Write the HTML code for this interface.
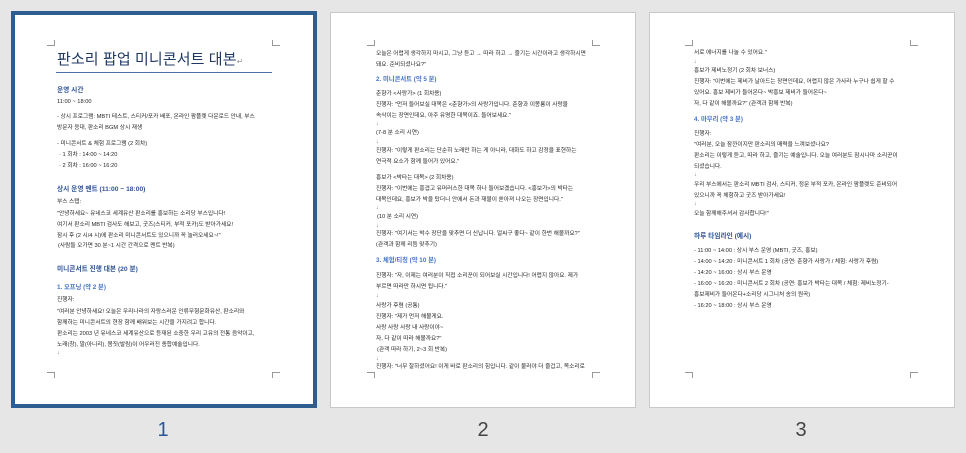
<!DOCTYPE html>
<html><head><meta charset="utf-8"><style>
*{margin:0;padding:0;box-sizing:border-box}
body{width:966px;height:453px;background:#e6e6e6;position:relative;overflow:hidden;font-family:"Liberation Sans","Noto Sans CJK KR",sans-serif}
.pg{position:absolute;background:#fff;border:1px solid #c8c8c8}
.sel{position:absolute;left:11px;top:11px;width:306px;height:397px;border:4px solid #2e5d91;background:#fff}
.t{position:absolute;font-size:5.7px;line-height:8px;color:#262626;white-space:nowrap}
.h{position:absolute;font-size:6.7px;line-height:9px;font-weight:bold;color:#2f5496;white-space:nowrap}
.h2{position:absolute;font-size:6.3px;line-height:9px;font-weight:bold;color:#4472c4;white-space:nowrap}
.c{position:absolute;width:8px;height:6px;border-color:#999;border-style:solid;border-width:0}
.n{position:absolute;top:418px;font-size:20px;line-height:24px;color:#444;width:40px;text-align:center}
.a{color:#888}
</style></head><body>
<div class="sel"></div>
<div class="pg" style="left:330px;top:12px;width:306px;height:396px"></div>
<div class="pg" style="left:649px;top:12px;width:306px;height:396px"></div>

<div class="c" style="left:47px;top:40px;border-right-width:1px;border-bottom-width:1px"></div>
<div class="c" style="left:272px;top:40px;border-left-width:1px;border-bottom-width:1px"></div>
<div class="c" style="left:47px;top:372px;border-right-width:1px;border-top-width:1px"></div>
<div class="c" style="left:272px;top:372px;border-left-width:1px;border-top-width:1px"></div>
<div class="c" style="left:367px;top:40px;border-right-width:1px;border-bottom-width:1px"></div>
<div class="c" style="left:592px;top:40px;border-left-width:1px;border-bottom-width:1px"></div>
<div class="c" style="left:367px;top:372px;border-right-width:1px;border-top-width:1px"></div>
<div class="c" style="left:592px;top:372px;border-left-width:1px;border-top-width:1px"></div>
<div class="c" style="left:685px;top:40px;border-right-width:1px;border-bottom-width:1px"></div>
<div class="c" style="left:910px;top:40px;border-left-width:1px;border-bottom-width:1px"></div>
<div class="c" style="left:685px;top:372px;border-right-width:1px;border-top-width:1px"></div>
<div class="c" style="left:910px;top:372px;border-left-width:1px;border-top-width:1px"></div>

<!-- page 1 -->
<div style="position:absolute;left:57px;top:50px;font-size:15px;line-height:20px;color:#1f3864;white-space:nowrap;letter-spacing:0.1px">판소리 팝업 미니콘서트 대본<span style="font-size:8px;color:#999">↵</span></div>
<div style="position:absolute;left:56px;top:72px;width:216px;height:1px;background:#4a70a8"></div>
<div class="h" style="left:57px;top:86px">운영 시간</div>
<div class="t" style="left:57px;top:98px">11:00 ~ 18:00</div>
<div class="t" style="left:57px;top:113px">- 상시 프로그램: MBTI 테스트, 스티커/포카 배포, 온라인 팜플렛 다운로드 안내, 부스</div>
<div class="t" style="left:57px;top:124px">방문자 응대, 판소리 BGM 상시 재생</div>
<div class="t" style="left:57px;top:140px">- 미니콘서트 &amp; 체험 프로그램 (2 회차)</div>
<div class="t" style="left:59px;top:151px">· 1 회차 : 14:00 ~ 14:20</div>
<div class="t" style="left:59px;top:162px">· 2 회차 : 16:00 ~ 16:20</div>
<div class="h" style="left:57px;top:185px">상시 운영 멘트 (11:00 ~ 18:00)</div>
<div class="t" style="left:57px;top:198px">부스 스탭:</div>
<div class="t" style="left:57px;top:210px">"안녕하세요~ 유네스코 세계유산 판소리를 홍보하는 소리당 부스입니다!</div>
<div class="t" style="left:57px;top:221px">여기서 판소리 MBTI 검사도 해보고, 굿즈(스티커, 부적 포카)도 받아가세요!</div>
<div class="t" style="left:57px;top:232px">잠시 후 (2 시/4 시)에 판소리 미니콘서트도 있으니까 꼭 놀러오세요~!"</div>
<div class="t" style="left:58px;top:242px">(사람들 오가면 30 분~1 시간 간격으로 멘트 반복)</div>
<div class="h" style="left:57px;top:265px">미니콘서트 진행 대본 (20 분)</div>
<div class="h2" style="left:57px;top:283px">1. 오프닝 (약 2 분)</div>
<div class="t" style="left:57px;top:296px">진행자:</div>
<div class="t" style="left:57px;top:308px">"여러분 안녕하세요! 오늘은 우리나라의 자랑스러운 인류무형문화유산, 판소리와</div>
<div class="t" style="left:57px;top:319px">함께하는 미니콘서트의 현장 함께 배워보는 시간을 가지려고 합니다.</div>
<div class="t" style="left:57px;top:330px">판소리는 2003 년 유네스코 세계유산으로 등재된 소중한 우리 고유의 전통 음악이고,</div>
<div class="t" style="left:57px;top:341px">노래(창), 말(아니리), 몸짓(발림)이 어우러진 종합예술입니다.</div>
<div class="t a" style="left:57px;top:349px">↓</div>

<!-- page 2 -->
<div class="t" style="left:376px;top:50px">오늘은 어렵게 생각하지 마시고, 그냥 듣고 → 따라 하고 → 즐기는 시간이라고 생각하시면</div>
<div class="t" style="left:376px;top:61px">돼요. 준비되셨나요?"</div>
<div class="h2" style="left:376px;top:75px">2. 미니콘서트 (약 5 분)</div>
<div class="t" style="left:376px;top:90px">춘향가 &lt;사랑가&gt; (1 회차용)</div>
<div class="t" style="left:376px;top:101px">진행자: "먼저 들어보실 대목은 &lt;춘향가&gt;의 사랑가입니다. 춘향과 이몽룡이 사랑을</div>
<div class="t" style="left:376px;top:112px">속삭이는 장면인데요, 아주 유명한 대목이죠. 들어보세요."</div>
<div class="t a" style="left:376px;top:120px">↓</div>
<div class="t" style="left:376px;top:129px">(7-8 분 소리 시연)</div>
<div class="t a" style="left:376px;top:138px">↓</div>
<div class="t" style="left:376px;top:147px">진행자: "이렇게 판소리는 단순히 노래만 하는 게 아니라, 대화도 하고 감정을 표현하는</div>
<div class="t" style="left:376px;top:158px">연극적 요소가 함께 들어가 있어요."</div>
<div class="t" style="left:376px;top:174px">흥보가 &lt;박타는 대목&gt; (2 회차용)</div>
<div class="t" style="left:376px;top:185px">진행자: "이번에는 흥겹고 유머러스한 대목 하나 들어보겠습니다. &lt;흥보가&gt;의 박타는</div>
<div class="t" style="left:376px;top:196px">대목인데요, 흥보가 박을 탔더니 안에서 돈과 재물이 쏟아져 나오는 장면입니다."</div>
<div class="t a" style="left:376px;top:204px">↓</div>
<div class="t" style="left:377px;top:213px">(10 분 소리 시연)</div>
<div class="t a" style="left:376px;top:222px">↓</div>
<div class="t" style="left:376px;top:230px">진행자: "여기서는 박수 장단을 맞추면 더 신납니다. 얼씨구 좋다~ 같이 한번 해볼까요?"</div>
<div class="t" style="left:376px;top:241px">(관객과 함께 리듬 맞추기)</div>
<div class="h2" style="left:376px;top:256px">3. 체험/티칭 (약 10 분)</div>
<div class="t" style="left:376px;top:272px">진행자: "자, 이제는 여러분이 직접 소리꾼이 되어보실 시간입니다! 어렵지 않아요. 제가</div>
<div class="t" style="left:376px;top:283px">부르면 따라만 하시면 됩니다."</div>
<div class="t a" style="left:376px;top:292px">↓</div>
<div class="t" style="left:376px;top:302px">사랑가 후렴 (공통)</div>
<div class="t" style="left:376px;top:313px">진행자: "제가 먼저 해볼게요.</div>
<div class="t" style="left:376px;top:324px">사랑 사랑 사랑 내 사랑이야~</div>
<div class="t" style="left:376px;top:335px">자, 다 같이 따라 해볼까요?"</div>
<div class="t" style="left:377px;top:346px">(관객 따라 하기, 2~3 회 반복)</div>
<div class="t a" style="left:376px;top:355px">↓</div>
<div class="t" style="left:376px;top:363px">진행자: "너무 잘하셨어요! 이게 바로 판소리의 힘입니다. 같이 불러야 더 즐겁고, 목소리로</div>

<!-- page 3 -->
<div class="t" style="left:694px;top:49px">서로 에너지를 나눌 수 있어요."</div>
<div class="t a" style="left:694px;top:58px">↓</div>
<div class="t" style="left:694px;top:67px">흥보가 제비노정기 (2 회차 보너스)</div>
<div class="t" style="left:694px;top:78px">진행자: "이번에는 제비가 날아드는 장면인데요, 어렵지 않은 가사라 누구나 쉽게 할 수</div>
<div class="t" style="left:694px;top:89px">있어요. 흥보 제비가 들어온다~ 박흥보 제비가 들어온다~</div>
<div class="t" style="left:694px;top:100px">자, 다 같이 해볼까요?" (관객과 함께 반복)</div>
<div class="h2" style="left:694px;top:115px">4. 마무리 (약 3 분)</div>
<div class="t" style="left:694px;top:130px">진행자:</div>
<div class="t" style="left:694px;top:141px">"여러분, 오늘 잠깐이지만 판소리의 매력을 느껴보셨나요?</div>
<div class="t" style="left:694px;top:152px">판소리는 이렇게 듣고, 따라 하고, 즐기는 예술입니다. 오늘 여러분도 잠시나마 소리꾼이</div>
<div class="t" style="left:694px;top:163px">되셨습니다.</div>
<div class="t a" style="left:694px;top:171px">↓</div>
<div class="t" style="left:694px;top:181px">우리 부스에서는 판소리 MBTI 검사, 스티커, 정문 부적 포카, 온라인 팜플렛도 준비되어</div>
<div class="t" style="left:694px;top:192px">있으니까 꼭 체험하고 굿즈 받아가세요!</div>
<div class="t a" style="left:694px;top:200px">↓</div>
<div class="t" style="left:694px;top:210px">오늘 함께해주셔서 감사합니다!"</div>
<div class="h" style="left:694px;top:232px">하루 타임라인 (예시)</div>
<div class="t" style="left:694px;top:247px">- 11:00 ~ 14:00 : 상시 부스 운영 (MBTI, 굿즈, 홍보)</div>
<div class="t" style="left:694px;top:258px">- 14:00 ~ 14:20 : 미니콘서트 1 회차 (공연: 춘향가 사랑가 / 체험: 사랑가 후렴)</div>
<div class="t" style="left:694px;top:269px">- 14:20 ~ 16:00 : 상시 부스 운영</div>
<div class="t" style="left:694px;top:280px">- 16:00 ~ 16:20 : 미니콘서트 2 회차 (공연: 흥보가 박타는 대목 / 체험: 제비노정기-</div>
<div class="t" style="left:694px;top:291px">흥보제비가 들어온다+소리당 시그니처 송의 원곡)</div>
<div class="t" style="left:694px;top:302px">- 16:20 ~ 18:00 : 상시 부스 운영</div>

<div class="n" style="left:143px;color:#2f5496">1</div>
<div class="n" style="left:463px">2</div>
<div class="n" style="left:781px">3</div>
</body></html>
